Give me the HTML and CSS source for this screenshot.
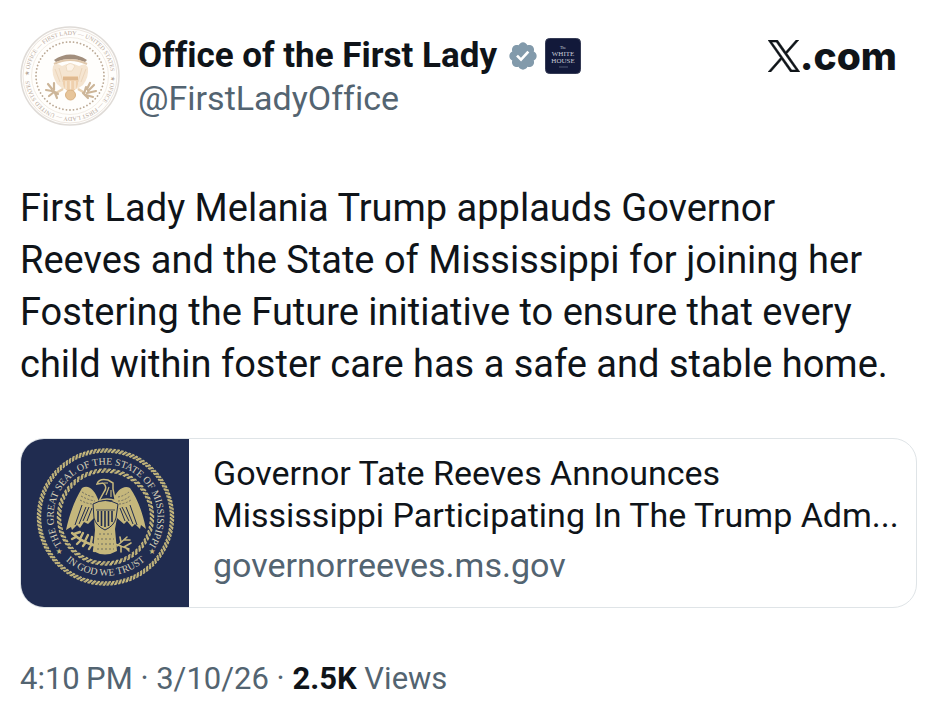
FILE: index.html
```html
<!DOCTYPE html>
<html lang="en">

<head>
  <meta charset="UTF-8">
  <meta name="viewport" content="width=device-width, initial-scale=1.0">
  <title>Office of the First Lady on X</title>
  <link rel="stylesheet" href="styles.css">
</head>

<body>
  <article class="post">
    <header class="post-header">
      <svg class="avatar" viewBox="0 0 100 100" role="img" aria-label="Office of the First Lady seal">
        <defs>
          <path id="ringTop" d="M9 50 A41 41 0 0 1 91 50" />
          <path id="ringBottom" d="M91 50 A41 41 0 0 1 9 50" />
        </defs>
        <circle cx="50" cy="50" r="49" fill="#fffefc" stroke="#dfdbd7" stroke-width="1.5" />
        <circle cx="50" cy="50" r="47" fill="none" stroke="#eee7e1" />
        <circle cx="50" cy="50" r="38.5" fill="none" stroke="#efe8e0" stroke-width=".8" />
        <circle cx="50" cy="50" r="34" fill="none" stroke="#bba995" stroke-width="1.8" stroke-linecap="round" pathLength="60" stroke-dasharray=".01 .99" />
        <text class="avatar-text"><textPath href="#ringTop">★ OFFICE — FIRST LADY — UNITED STATES</textPath></text>
        <text class="avatar-text"><textPath href="#ringBottom">★ OFFICE — FIRST LADY — UNITED STATES</textPath></text>
        <path d="M34 34 Q50 23 67 34 L65 36 Q50 30 36 36Z" fill="#a28e7c" />
        <path d="M34 38 Q50 30 67 38" fill="none" stroke="#e0c8ac" stroke-width="2" />
        <path d="M33 40 Q36 36 42 40 Q50 35 59 40 Q66 36 68 42 Q69 51 63 59 L57 63 H43 L37 58 Q31 48 33 40Z" fill="#f5e5d1" />
        <path d="M35 43l5 13M39 42l4 14M66 43l-5 13M62 42l-4 14" stroke="#ecd5ba" stroke-width="1" />
        <path d="M43 50h15v8q-1 6-7.5 9Q44 64 43 58Z" fill="#efd0ad" />
        <path d="M43 51h15v3H43z" fill="#dfb990" />
        <path d="M46 55v8M50.5 55v10M55 55v8" stroke="#f8e8d4" stroke-width="1.4" />
        <path d="M46 40q4-5 9 0l-3 5h-5Z" fill="#fdf3e7" stroke="#ead5ba" stroke-width=".7" />
        <path d="M43 63l-7 4M58 63l7 4" fill="none" stroke="#e6cfb0" stroke-width="2.5" />
        <circle cx="50.5" cy="69" r="5" fill="#e7c59a" stroke="#d9b283" />
        <path d="M28 58l4 5M26 64l6 1M29 70l5-4M34 57v7M37 72l-2-5M33 65l5 3M70 57l-3 6M74 59l-6 6M76 65l-9 2M73 71l-7-2M66 61l-2 7M63 67l5 5" stroke="#ccb598" stroke-width="2.2" stroke-linecap="round" />
      </svg>
      <div class="author">
        <div class="author-row">
          <h1 class="author-name">Office of the First Lady</h1>
          <svg class="verified" viewBox="0 0 22 22" role="img" aria-label="Verified account">
            <path fill="#829aab" d="M20.396 11c-.018-.646-.215-1.275-.57-1.816-.354-.54-.852-.972-1.438-1.246.223-.607.27-1.264.14-1.897-.131-.634-.437-1.218-.882-1.687-.47-.445-1.053-.75-1.687-.882-.633-.13-1.29-.083-1.897.14-.273-.587-.704-1.086-1.245-1.44S11.647 1.62 11 1.604c-.646.017-1.273.213-1.813.568s-.969.854-1.24 1.44c-.608-.223-1.267-.272-1.902-.14-.635.13-1.22.436-1.69.882-.445.47-.749 1.055-.878 1.688-.13.633-.08 1.29.144 1.896-.587.274-1.087.705-1.443 1.245-.356.54-.555 1.17-.574 1.817.02.647.218 1.276.574 1.817.356.54.856.972 1.443 1.245-.224.606-.274 1.263-.144 1.896.13.634.433 1.218.877 1.688.47.443 1.054.747 1.687.878.633.132 1.29.084 1.897-.136.274.586.705 1.084 1.246 1.439.54.354 1.17.551 1.816.569.647-.016 1.276-.213 1.817-.567s.972-.854 1.245-1.44c.604.239 1.266.296 1.903.164.636-.132 1.22-.447 1.68-.907.46-.46.776-1.044.908-1.681s.075-1.299-.165-1.903c.586-.274 1.084-.705 1.439-1.246.354-.54.551-1.17.569-1.816zM9.662 14.85l-3.429-3.428 1.293-1.302 2.072 2.072 4.4-4.794 1.347 1.246z" />
          </svg>
          <svg class="affiliate" viewBox="0 0 36 36" role="img" aria-label="The White House">
            <rect x=".5" y=".5" width="35" height="35" rx="4" fill="#12193a" stroke="#353b55" />
            <text class="affiliate-the" x="18" y="11">The</text>
            <text class="affiliate-text" x="18" y="18">WHITE</text>
            <text class="affiliate-text" x="18" y="25">HOUSE</text>
            <path d="M14 29h9" stroke="#6f758c" stroke-width=".7" />
          </svg>
        </div>
        <a class="handle" href="#">@FirstLadyOffice</a>
      </div>
      <div class="brand">
        <svg class="brand-x" viewBox="0 0 24 24" role="img" aria-label="X">
          <path fill="#0f1419" stroke="#0f1419" stroke-width=".4" d="M14.258 10.152 23.176 0h-2.113l-7.747 8.813L7.133 0H0l9.352 13.328L0 23.973h2.113l8.176-9.309 6.531 9.309h7.133zm-2.895 3.293-.949-1.328L2.875 1.56h3.246l6.086 8.523.945 1.328 7.91 11.078h-3.246z" />
        </svg>
        <span>.com</span>
      </div>
    </header>

    <p class="post-text">First Lady Melania Trump applauds Governor Reeves and the State of Mississippi for joining her Fostering the Future initiative to ensure that every child within foster care has a safe and stable home.</p>

    <a class="card" href="#">
      <svg class="card-image" viewBox="0 0 168 168" role="img" aria-label="The Great Seal of the State of Mississippi">
        <defs>
          <path id="sealTop" d="M47.9 114.6 A52 52 0 1 1 121.1 114.6" />
          <path id="sealBottom" d="M36 112 A60 60 0 0 0 133 112" />
        </defs>
        <rect width="168" height="168" fill="#202c50" />
        <!-- rope borders, each strand slanted by shifting the dashes -->
        <g fill="none" stroke="#c5b77c" stroke-width="1.4">
          <circle cx="84.5" cy="78" r="65" pathLength="110" stroke-dasharray=".65 .35" />
          <circle cx="84.5" cy="78" r="66" pathLength="110" stroke-dasharray=".65 .35" stroke-dashoffset="-.2" />
          <circle cx="84.5" cy="78" r="67" pathLength="110" stroke-dasharray=".65 .35" stroke-dashoffset="-.4" />
          <circle cx="84.5" cy="78" r="68" pathLength="110" stroke-dasharray=".65 .35" stroke-dashoffset="-.6" />
          <circle cx="84.5" cy="78" r="45" pathLength="64" stroke-dasharray=".6 .4" />
          <circle cx="84.5" cy="78" r="46" pathLength="64" stroke-dasharray=".6 .4" stroke-dashoffset="-.2" />
          <circle cx="84.5" cy="78" r="47" pathLength="64" stroke-dasharray=".6 .4" stroke-dashoffset="-.4" />
          <circle cx="84.5" cy="78" r="48" pathLength="64" stroke-dasharray=".6 .4" stroke-dashoffset="-.6" />
        </g>
        <text class="seal-text"><textPath href="#sealTop" startOffset="50%">THE GREAT SEAL OF THE STATE OF MISSISSIPPI</textPath></text>
        <text class="seal-text"><textPath href="#sealBottom" startOffset="50%">IN GOD WE TRUST</textPath></text>
        <text class="seal-star" x="38" y="115">★</text>
        <text class="seal-star" x="131" y="115">★</text>
        <!-- eagle -->
        <path d="M78 63 C74 50 67 45 61 49 C54 61 49 73 45 91 L50 88 L51 91 L56 86 L59 89 L63 83 L67 85 L73 79 L74 91 L72 112 Q84 119 96 112 L94 90 L96 79 L103 85 L106 82 L111 88 L114 85 L119 90 L120 86 L125 90 C121 71 116 59 109 49 C103 46 96 50 91 63Z" fill="#c5b77c" />
        <path d="M78 62 L83 53 Q87 48 82 44 L76 45 Q78 39 87 41 L92 44 V50 L94 60 L96 62 Q85 58 78 62Z" fill="#202c50" stroke="#c5b77c" stroke-width="1.5" />
        <path d="M83 44h4M88 48l-3 8M90 51v7" stroke="#c5b77c" stroke-width="1.2" />
        <path d="M61 66l-7 20M65 68l-7 17M68 68l-6 14M71 69l-5 13M109 66l7 20M105 68l7 17M101 68l7 14M99 69l5 13" stroke="#202c50" stroke-width="1" />
        <path d="M61 53q6 4 12 5M60 57q7 4 14 5M59 61q7 4 13 4M97 58q6-1 11-5M97 62q6 0 12-5M98 65q6 0 12-4" fill="none" stroke="#6f6e63" stroke-dasharray="2 1.5" />
        <path d="M72 65 Q84 58 97 65 L95 79 Q93 87 84 91 Q75 87 73 79Z" fill="#c5b77c" stroke="#202c50" />
        <path d="M77 72v11M80.5 72v15M84 72v16M87.5 72v15M91 72v11" stroke="#202c50" stroke-width="1.6" />
        <path d="M75 71h19" stroke="#202c50" stroke-width=".8" />
        <path d="M78 95h13M76 100h17M76 105h17M76 110h17" stroke="#6f6e63" stroke-dasharray="2 2" />
        <path d="M51 94 Q63 105 77 107M53 95l6-2M55 98l-4 2M59 100l3-6M60 101l-4 4M64 102l3-6M65 103l-3 4M70 104l1-6M71 105l-3 5M76 106l-1-7M75 107l-2 5" fill="none" stroke="#c5b77c" stroke-width="2.4" stroke-linecap="round" />
        <path d="M94 105l14 5M96 107l10-9M100 103l-1-5M103 101l6 0M103 108l7-4M100 107v6M105 109l3 3" fill="none" stroke="#c5b77c" stroke-width="1.6" stroke-linecap="round" />
      </svg>
      <div class="card-body">
        <div class="card-title">Governor Tate Reeves Announces<br>Mississippi Participating In The Trump Adm...</div>
        <div class="card-domain">governorreeves.ms.gov</div>
      </div>
    </a>

    <footer class="post-meta">
      <time datetime="2026-03-10T16:10">4:10&thinsp;PM · 3/10/26</time> · <strong>2.5K</strong> Views
    </footer>
  </article>
</body>

</html>
```
FILE: styles.css
```css
body {
  margin: 0;
  background: #fff;
  color: #0f1419;
  font-family: Roboto, "Liberation Sans", Arial, sans-serif;
  font-variant-ligatures: none;
}

a {
  color: inherit;
  text-decoration: none;
}

.post {
  padding: 26px 20px 16px;
}

.post-header {
  display: flex;
  align-items: flex-start;
  gap: 18px;
}

.avatar {
  width: 100px;
  height: 100px;
  flex-shrink: 0;
}

.avatar-text {
  font: 6px "Liberation Serif", serif;
  fill: #b9aa9c;
}

.author {
  flex: 1;
  padding-top: 9px;
}

.author-row {
  display: flex;
  align-items: center;
}

.author-name {
  margin: 0;
  font-size: 35px;
  line-height: 42px;
  font-weight: 700;
}

.verified {
  width: 32px;
  height: 32px;
  margin-left: 10px;
}

.affiliate {
  width: 36px;
  height: 36px;
  margin-left: 6px;
}

.affiliate-the,
.affiliate-text {
  font: 7px "Liberation Serif", serif;
  fill: #c9ccd8;
  text-anchor: middle;
}

.affiliate-the {
  font-size: 4px;
}

.handle {
  display: block;
  color: #536471;
  font-size: 34px;
  line-height: 42px;
}

.brand {
  display: flex;
  align-items: center;
  padding: 8px 20px 0 0;
  font: 800 39px/44px Inter, "Liberation Sans", Arial, sans-serif;
}

.brand-x {
  width: 32px;
  height: 32px;
}

.post-text {
  margin: 56px 0 48px;
  padding-right: 16px;
  font-size: 38px;
  line-height: 52px;
}

.card {
  display: flex;
  border: 1px solid #dfe4e7;
  border-radius: 24px;
  overflow: hidden;
}

.card-image {
  width: 168px;
  height: 168px;
  flex-shrink: 0;
}

.seal-text {
  font: 10px "Liberation Serif", serif;
  fill: #d8d2b8;
  text-anchor: middle;
}

.seal-star {
  font: 8px "DejaVu Sans", sans-serif;
  fill: #c5b77c;
  text-anchor: middle;
}

.card-body {
  padding: 13px 12px 13px 24px;
  min-width: 0;
}

.card-title {
  font-size: 34px;
  line-height: 42px;
}

.card-domain {
  margin-top: 8px;
  color: #536471;
  font-size: 34px;
  line-height: 42px;
}

.post-meta {
  margin-top: 50px;
  color: #536471;
  font-size: 31px;
  line-height: 42px;
}

.post-meta strong {
  color: #0f1419;
}
```
